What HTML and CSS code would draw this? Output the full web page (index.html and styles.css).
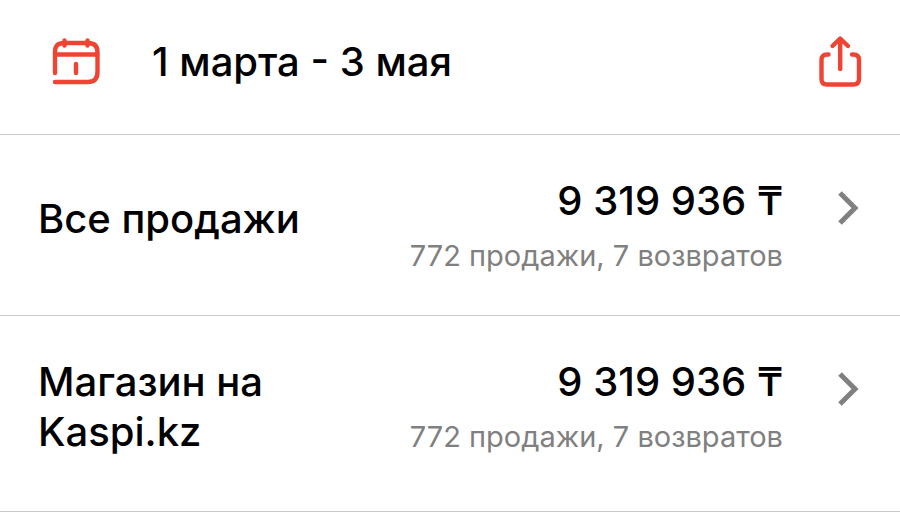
FILE: index.html
```html
<!DOCTYPE html>
<html lang="ru">
    <head>
        <meta charset="utf-8" />
        <title>Продажи</title>
        <link rel="stylesheet" href="styles.css">
    </head>
    <body>
        <header class="toolbar">
            <button type="button" class="period">
                <svg class="icon" width="48" height="48" viewBox="0 0 48 48">
                    <path d="M3 35V14Q3 5 12 5H36Q45.500 5 45.500 14V34Q45.500 44 36 44H3M3 16.500H45M24 26V35" />
                    <path d="M12.500 2.500V7.500M35.500 2.500V7.500" />
                </svg>
                <span>1 марта - 3 мая</span>
            </button>
            <button type="button" class="share" aria-label="Поделиться">
                <svg class="icon" width="44" height="52" viewBox="0 0 44 52">
                    <path d="M10.500 18.500H9Q3.500 18.500 3.500 24V43Q3.500 48.500 9 48.500H35.500Q41 48.500 41 43V24Q41 18.500 35.500 18.500H34M22.200 33V3M14.500 10L22.200 2.500L30 10" />
                </svg>
            </button>
        </header>
        <main>
            <a class="row" href="#all">
                <span class="name">Все продажи</span>
                <span class="totals">
                    <span class="sum">9 319 936 ₸</span>
                    <span class="count">772 продажи, 7 возвратов</span>
                </span>
                <svg class="arrow" width="20" height="34" viewBox="0 0 20 34"><path d="M1 2l15 15L1 32" /></svg>
            </a>
            <a class="row tall" href="#kaspi">
                <span class="name">Магазин на Kaspi.kz</span>
                <span class="totals">
                    <span class="sum">9 319 936 ₸</span>
                    <span class="count">772 продажи, 7 возвратов</span>
                </span>
                <svg class="arrow" width="20" height="34" viewBox="0 0 20 34"><path d="M1 2l15 15L1 32" /></svg>
            </a>
        </main>
    </body>
</html>
```

FILE: styles.css
```css
* {
    box-sizing: border-box;
}
body {
    margin: 0;
    background-color: #fff;
    color: #000;
    font-family: Inter, Roboto, sans-serif;
    font-size: 40px;
    font-weight: 500;
    line-height: 50px;
}
button {
    padding: 0;
    border: 0;
    background: none;
    color: inherit;
    font: inherit;
}
svg {
    display: block;
    flex: none;
    fill: none;
    overflow: visible;
}
.toolbar {
    display: flex;
    align-items: center;
    justify-content: space-between;
    padding: 36px 38px 46px 52px;
    border-bottom: 1px solid #c8c8c8;
}
.period {
    display: flex;
    align-items: center;
    gap: 52px;
}
.icon {
    stroke: #ef4433;
    stroke-width: 4.4;
    stroke-linecap: round;
    stroke-linejoin: round;
}
.row {
    display: flex;
    align-items: flex-start;
    padding: 41px 41px 39px 38px;
    border-bottom: 1px solid #c8c8c8;
    color: inherit;
    text-decoration: none;
}
.name {
    width: 280px;
    padding-top: 18px;
}
.totals {
    flex: 1;
    text-align: right;
}
.sum,
.count {
    display: block;
}
.count {
    margin-top: 10px;
    color: #808080;
    font-size: 29px;
    font-weight: 400;
    line-height: 40px;
}
.arrow {
    margin: 15px 0 0 56px;
    stroke: #808080;
    stroke-width: 5;
}
.tall .name {
    padding-top: 0;
}
.tall {
    padding-bottom: 54px;
}
```
